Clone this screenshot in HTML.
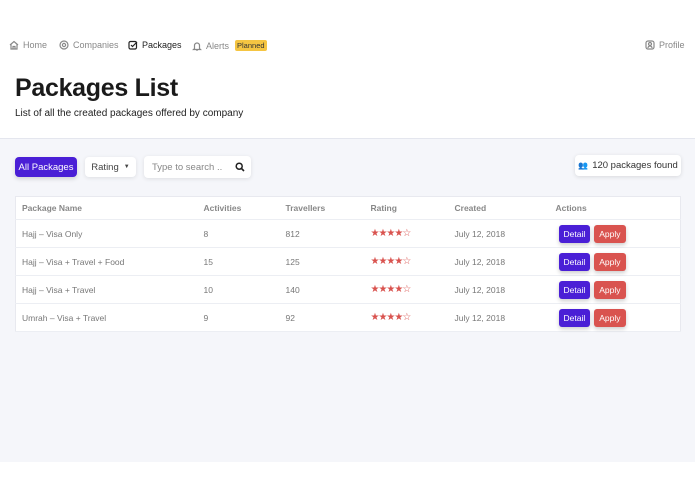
<!DOCTYPE html><html><head><style>
*{margin:0;padding:0;box-sizing:border-box}
body{width:695px;height:494px;background:#fff;font-family:"Liberation Sans",sans-serif;position:relative;overflow:hidden;color:#222}
.nav{position:absolute;top:40px;font-size:9px;color:#888;display:flex;align-items:center;gap:4px}
.nav svg{width:10px;height:10px;stroke:#888;fill:none;stroke-width:1.2}
h1{position:absolute;left:15px;top:74px;font-size:25px;font-weight:bold;color:#1a1a1a;letter-spacing:-0.3px}
.sub{position:absolute;left:15px;top:108px;font-size:10px;color:#222}
.gray{position:absolute;left:0;top:138px;width:695px;height:324px;background:#f5f6fa;border-top:1px solid #e4e6ee}
.btn{position:absolute;border-radius:4px;font-size:9.5px;display:flex;align-items:center;justify-content:center}
table{position:absolute;left:15px;top:196px;width:666px;border-collapse:collapse;background:#fff;border:1px solid #e8e9ef;font-size:8.5px;color:#777}
th{text-align:left;font-weight:bold;color:#888;height:23px;padding-left:6px;border-bottom:1px solid #eceef3}
td{height:28px;padding-left:6px;border-bottom:1px solid #eceef3}
td.r{color:#d9534f;font-size:10px;letter-spacing:-1px}
.d,.a{display:inline-block;color:#fff;font-size:8.5px;padding:4px 5px;border-radius:3px;box-shadow:0 2px 4px rgba(0,0,0,.2)}
.d{background:#4a1fd6;margin-left:3px}.a{background:#d9534f;margin-left:4px}
</style></head><body>
<div class="nav" style="left:9px"><svg viewBox="0 0 10 10"><path d="M1 5L5 1.5 9 5M2 4.5V9h6V4.5M4 9V6.5h2V9"/></svg>Home</div>
<div class="nav" style="left:59px"><svg viewBox="0 0 10 10"><circle cx="5" cy="5" r="4"/><circle cx="5" cy="5" r="1.6"/></svg>Companies</div>
<div class="nav" style="left:128px;color:#222"><svg viewBox="0 0 10 10" style="stroke:#222"><rect x="1" y="1.5" width="7.5" height="7.5" rx="1.5"/><path d="M3 5l1.5 1.5L9 2"/></svg>Packages</div>
<div class="nav" style="left:192px"><svg viewBox="0 0 10 10"><path d="M2.5 7.5V4.5a2.5 2.5 0 015 0v3l1 1h-7zM4 9h2"/></svg>Alerts <span style="background:#f5c542;color:#333;font-size:7.5px;padding:1px 2px;border-radius:2px;margin-left:2px">Planned</span></div>
<div class="nav" style="left:645px"><svg viewBox="0 0 10 10"><rect x="1" y="1" width="8" height="8" rx="2"/><circle cx="5" cy="4" r="1.5"/><path d="M3 8a2 2 0 014 0"/></svg>Profile</div>
<h1>Packages List</h1>
<div class="sub">List of all the created packages offered by company</div>
<div class="gray"></div>
<div class="btn" style="left:15px;top:157px;width:62px;height:20px;background:#4a1fd6;color:#fff;box-shadow:0 2px 4px rgba(0,0,0,.15)">All Packages</div>
<div class="btn" style="left:85px;top:157px;width:51px;height:20px;background:#fff;color:#444;box-shadow:0 1px 4px rgba(0,0,0,.1)">Rating <span style="font-size:6px;margin-left:5px">▼</span></div>
<div class="btn" style="left:144px;top:156px;width:107px;height:22px;background:#fff;color:#888;justify-content:flex-start;padding-left:8px;box-shadow:0 1px 4px rgba(0,0,0,.1)">Type to search ..<svg style="position:absolute;right:6px;top:6px" width="10" height="10" viewBox="0 0 10 10"><circle cx="4.2" cy="4.2" r="3" fill="none" stroke="#222" stroke-width="1.5"/><path d="M6.5 6.5L9 9" stroke="#222" stroke-width="1.6"/></svg></div>
<div class="btn" style="left:575px;top:155px;width:106px;height:21px;background:#fff;color:#333;box-shadow:0 1px 4px rgba(0,0,0,.12)"><span style="color:#6a8cc7;font-size:8px;margin-right:4px">👥</span>120 packages found</div>
<table>
<tr><th style="width:182px">Package Name</th><th style="width:82px">Activities</th><th style="width:85px">Travellers</th><th style="width:84px">Rating</th><th style="width:101px">Created</th><th>Actions</th></tr>
<tr><td>Hajj – Visa Only</td><td>8</td><td>812</td><td class="r">★★★★☆</td><td>July 12, 2018</td><td><span class="d">Detail</span><span class="a">Apply</span></td></tr>
<tr><td>Hajj – Visa + Travel + Food</td><td>15</td><td>125</td><td class="r">★★★★☆</td><td>July 12, 2018</td><td><span class="d">Detail</span><span class="a">Apply</span></td></tr>
<tr><td>Hajj – Visa + Travel</td><td>10</td><td>140</td><td class="r">★★★★☆</td><td>July 12, 2018</td><td><span class="d">Detail</span><span class="a">Apply</span></td></tr>
<tr><td>Umrah – Visa + Travel</td><td>9</td><td>92</td><td class="r">★★★★☆</td><td>July 12, 2018</td><td><span class="d">Detail</span><span class="a">Apply</span></td></tr>
</table>
</body></html>
